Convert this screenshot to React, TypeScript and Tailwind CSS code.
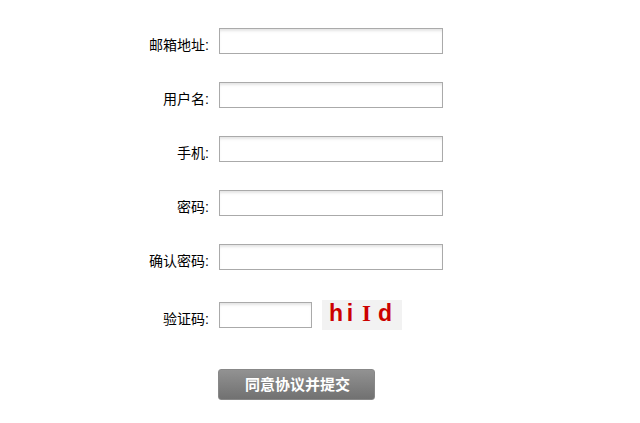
import React from 'react';

const fields = ['邮箱地址:', '用户名:', '手机:', '密码:', '确认密码:'];

const inputClass =
  'h-[26px] border border-[#aaaaaa] bg-white shadow-[inset_0_3px_3px_-1px_#e4e4e4] outline-none';

export default function App() {
  return (
    <main className="min-h-[423px] bg-white pt-7 font-['Liberation_Sans','Noto_Sans_CJK_SC',sans-serif] text-sm text-black">
      {fields.map(label => (
        <div key={label} className="mb-7 flex h-[26px] items-start">
          <label className="mt-[9px] w-[209px] text-right leading-4">{label}</label>
          <input className={`ml-[10px] w-[224px] ${inputClass}`} />
        </div>
      ))}

      {/* captcha row */}
      <div className="mt-8 flex h-[26px] items-start">
        <label className="mt-[9px] w-[209px] text-right leading-4">验证码:</label>
        <input className={`ml-[10px] w-[93px] ${inputClass}`} />
        <div className="ml-[10px] -mt-0.5 flex h-[30px] w-[80px] items-center bg-[#f2f2f2] pb-1 pl-[7px] text-[23px] font-bold leading-none text-[#cc0000]">
          <span className="w-[14px] text-center">h</span>
          <span className="w-[14px] text-center">i</span>
          <span className="w-[19px] text-center font-['Liberation_Serif',serif]">I</span>
          <span className="w-[18px] text-center">d</span>
        </div>
      </div>

      <div className="mt-[41px] pl-[218px]">
        <button className="h-[31px] w-[157px] rounded-[3px] border border-[#888888] bg-gradient-to-b from-[#929292] to-[#717171] pl-0.5 text-[15px] font-bold text-white">
          同意协议并提交
        </button>
      </div>
    </main>
  );
}
